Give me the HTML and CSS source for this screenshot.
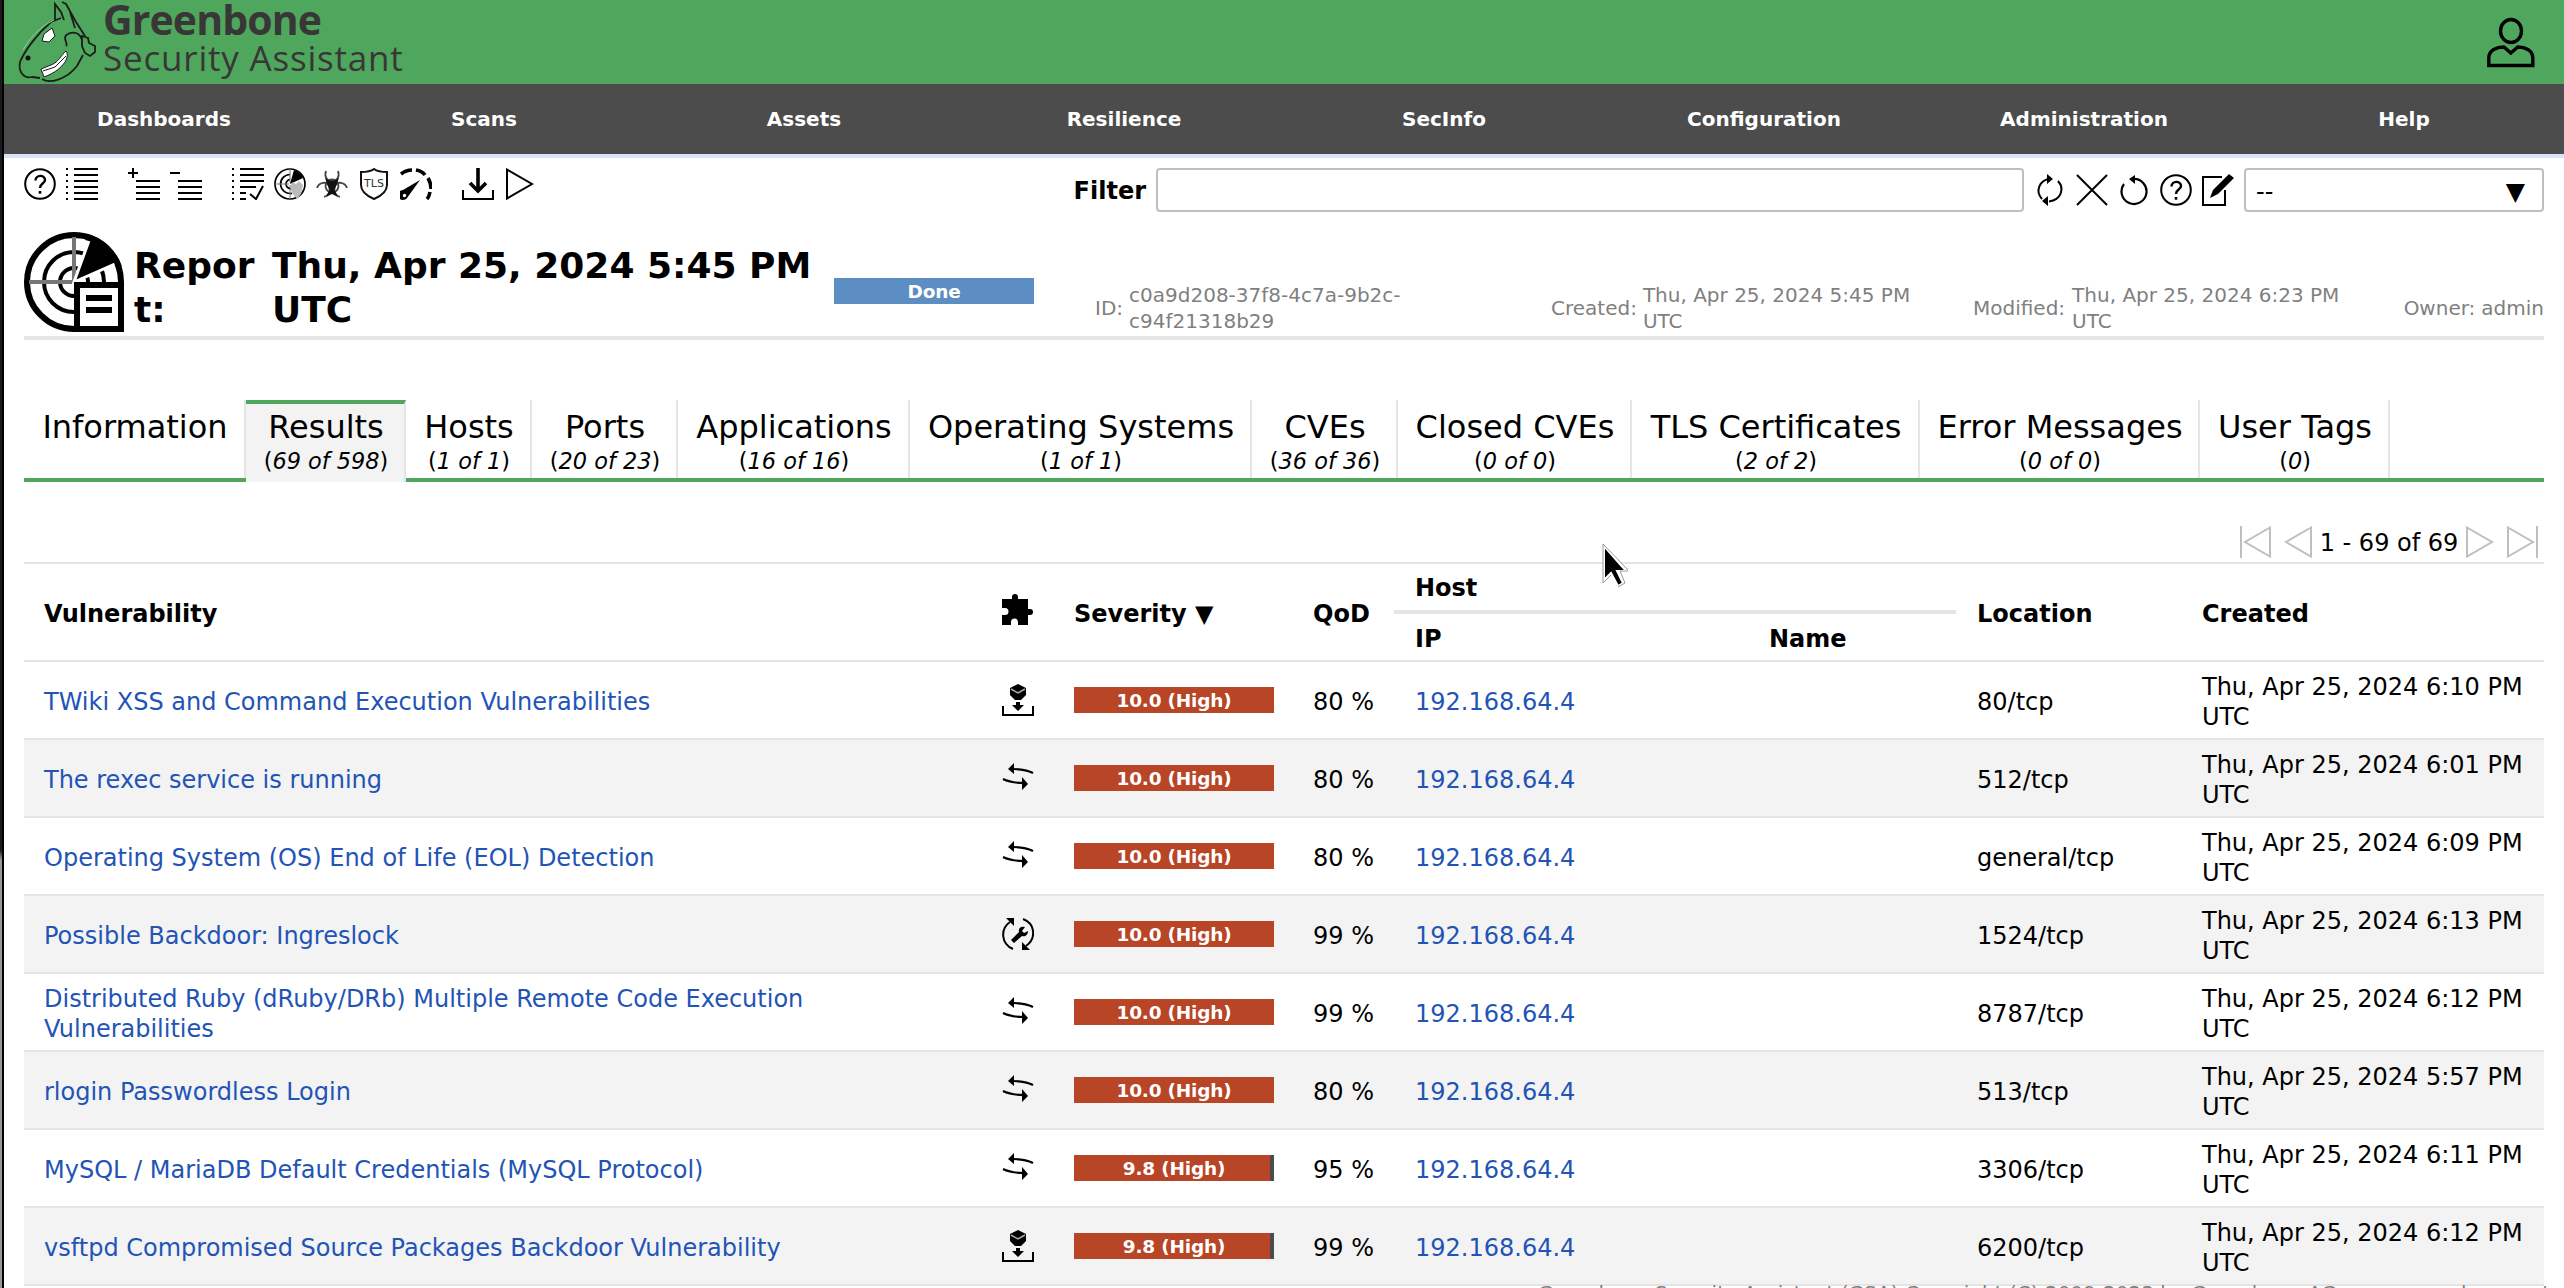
FILE: index.html
```html
<!DOCTYPE html>
<html lang="en">
<head>
<meta charset="utf-8">
<title>Greenbone Security Assistant</title>
<link rel="stylesheet" href="styles.css">
</head>
<body>
<svg class="defs" width="0" height="0">
  <defs>
    <symbol id="help" viewBox="0 0 32 32"><circle cx="16" cy="16" r="14.8" fill="none" stroke="#000" stroke-width="2"/><path d="M11.5 12.5c0-6 9.5-6 9.5-.6 0 3.800-5 3.600-5 8" fill="none" stroke="#000" stroke-width="2.400"/><path d="M14.700 23h2.600v2.700h-2.600z"/></symbol>
    <symbol id="list" viewBox="0 0 32 32"><path d="M8 1h24M8 7h24M8 13h24M8 19h24M8 25h24M8 31h24" stroke="#000" stroke-width="2"/><path d="M0 1h2M0 7h2M0 13h2M0 19h2M0 25h2M0 31h2" stroke="#000" stroke-width="2"/></symbol>
    <symbol id="plus" viewBox="0 0 32 32"><path d="M0 5h10M5 0v10M8 13h24M8 19h24M8 25h24M8 31h24" stroke="#000" stroke-width="2"/></symbol>
    <symbol id="minus" viewBox="0 0 32 32"><path d="M0 5h10M8 13h24M8 19h24M8 25h24M8 31h24" stroke="#000" stroke-width="2"/></symbol>
    <symbol id="results" viewBox="0 0 32 32"><path d="M8 1h24M8 7h24M8 13h24M8 19h16M8 25h6M8 31h6M0 1h2M0 7h2M0 13h2M0 19h2M0 25h2M0 31h2" stroke="#000" stroke-width="2"/><path d="M18 26l6 5L31 18" fill="none" stroke="#000" stroke-width="2"/></symbol>
    <symbol id="radar" viewBox="0 0 32 32"><g fill="none" stroke="#000" stroke-width="1.700"><circle cx="16" cy="16" r="15"/><path d="M16 6.500a9.500 9.500 0 1 0 2 18.800M16 11.500a4.500 4.500 0 1 0 1 9"/><path d="M16 1v14M1 16h14M16 17v14" stroke="#777" stroke-width="1"/></g><path d="M16 16L20 2a14 14 0 0 1 9 8z"/><path d="M16 18l3-4 3 2 3-3 4 4-2 9-4 5-5-6z" fill="#bbb"/></symbol>
    <symbol id="bio" viewBox="0 0 32 32"><g fill="none" stroke="#444" stroke-width="1.800"><path d="M10 3c-2 6 1 10 6 10s8-4 6-10M1 20c2-6 10-7 12-2 2 6-1 10-5 11M31 20c-2-6-10-7-12-2-2 6 1 10 5 11"/><circle cx="16" cy="18" r="6.500"/></g><path d="M9 10q7 6 14 0l-3 8-2 4h-4l-2-4zM14 21h4l4 8-6-3-6 3z" fill="#111"/></symbol>
    <symbol id="tls" viewBox="0 0 32 32"><path d="M16 1c-4 3-8 3-13 3v13c0 7 6 11 13 14 7-3 13-7 13-14V4C24 4 20 4 16 1z" fill="none" stroke="#111" stroke-width="2"/><text x="16" y="19" text-anchor="middle" class="tls-text">TLS</text></symbol>
    <symbol id="gauge" viewBox="0 0 32 32"><g fill="none" stroke="#000" stroke-width="3.600"><path d="M1 6q5-4 11-4M16 2q6 1 9 5M28 10q3 5 3 11M30 24q-1 5-3 7"/></g><path d="M20 12L7 30a5 5 0 1 1-4-8z"/><circle cx="4.500" cy="27.500" r="1.700" fill="#fff"/></symbol>
    <symbol id="download" viewBox="0 0 32 32"><path d="M1 22v9h30v-9" fill="none" stroke="#000" stroke-width="2"/><path d="M16 0v22M8 15l8 8 8-8" fill="none" stroke="#000" stroke-width="3.600"/></symbol>
    <symbol id="play" viewBox="0 0 32 32"><path d="M3 1.500L28 16 3 30.500z" fill="none" stroke="currentColor" stroke-width="2"/></symbol>
    <symbol id="prev" viewBox="0 0 32 32"><path d="M29 1.500L4 16l25 14.500z" fill="none" stroke="currentColor" stroke-width="2"/></symbol>
    <symbol id="first" viewBox="0 0 32 32"><path d="M1 0v32M30 1.500L5 16l25 14.500z" fill="none" stroke="currentColor" stroke-width="2"/></symbol>
    <symbol id="last" viewBox="0 0 32 32"><path d="M31 0v32M2 1.500L27 16 2 30.500z" fill="none" stroke="currentColor" stroke-width="2"/></symbol>
    <symbol id="refresh" viewBox="0 0 32 32"><path d="M8 25C1 17 5 6 17 4.500M24 7c7 8 3 19-9 20.500" fill="none" stroke="#000" stroke-width="2"/><path d="M13 0l6 5-6 5zM14 22l-6 5 6 5z"/></symbol>
    <symbol id="close" viewBox="0 0 32 32"><path d="M1 1l30 30M31 1L1 31" stroke="#000" stroke-width="2"/></symbol>
    <symbol id="reset" viewBox="0 0 32 32"><path d="M6 10a12.500 12.500 0 1 0 9-5" fill="none" stroke="#000" stroke-width="2.200"/><path d="M17 1v9l-6-5z"/></symbol>
    <symbol id="edit" viewBox="0 0 32 32"><path d="M20 3H1v28h22V16" fill="none" stroke="#000" stroke-width="2"/><path d="M8 24l3-8L27 0l5 4-16 16z"/></symbol>
    <symbol id="puzzle" viewBox="0 0 32 32"><path d="M0 6h10V4a3 3 0 1 1 6 0v2h10v10h2a3 3 0 1 1 0 6h-2v10H16v-3a3.500 3.500 0 0 0-7 0v3H0V22h3a3.500 3.500 0 0 0 0-7H0z"/></symbol>
    <symbol id="vendor" viewBox="0 0 32 32"><path d="M1 22v9h30v-9" fill="none" stroke="#000" stroke-width="2"/><path d="M16 0l8 4v7l-5 5h-6l-5-5V4zM14 18h4v3h4l-6 6-6-6h4z"/><path d="M9 5l7 4 7-4" fill="none" stroke="#aaa" stroke-width="1.500"/></symbol>
    <symbol id="mitigate" viewBox="0 0 32 32"><path d="M10 7c8 0 15 1 21 4M1 17c6 3 13 4 21 4" fill="none" stroke="#000" stroke-width="2.200"/><path d="M12 1L6 7l6 5zM20 15v13l6-6z"/></symbol>
    <symbol id="fix" viewBox="0 0 32 32"><path d="M8 4C-2 11-1 26 11 31M21 1C34 6 34 21 24 28" fill="none" stroke="#000" stroke-width="2"/><path d="M4 0h8v8zM28 32h-8v-8z"/><path d="M9 22l8-8c-1-4 2-6 6-5l-3 4 2 2 4-2c0 4-3 6-6 5l-8 7z"/></symbol>
  </defs>
</svg>
<div class="desktop"></div>
<div class="app">
  <header class="header">
    <svg class="horse" viewBox="0 0 76 84"><g fill="none" stroke="#1c1c1c" stroke-width="1.800"><path d="M45 18L35 22C22 33 9 50 4 62C2 72 8 79 16 77L24 78"/><path d="M26 79C33 84 50 80 61 66L67 55"/><path d="M39 20L39 4l6 8 3 8M46 2l4 2 10 18 9 14M54 12l5 16"/><path d="M50 46c3-2-5-9 2-12 6-3 12-1 14 6M66 36l6 2 1 5 6 3v6l-5 4-5-3-3-7z"/></g><path d="M28 34l8-6 3 8-6 6-7-1z" fill="#fff" stroke="#1c1c1c"/><path d="M25 69l10-4c8-3 10-10 15-14 5 7-5 20-22 26z" fill="#fff" stroke="#1c1c1c"/><path d="M27 71l12-4 11-11" fill="none" stroke="#1c1c1c"/><path d="M7 50C14 38 22 28 38 20" fill="none" stroke="#8bcf9a"/><circle cx="12" cy="58" r="2.500" fill="#111"/></svg>
    <div class="brand"><div class="brand-name">Greenbone</div><div class="brand-sub">Security Assistant</div></div>
    <svg class="user" viewBox="0 0 48 50"><g fill="none" stroke="#000" stroke-width="3.400"><ellipse cx="24" cy="13" rx="10.500" ry="11.500"/><path d="M1.800 47.500V40c0-8 8-11 15-11l7 6 7-6c7 0 15 3 15 11v7.500z"/></g></svg>
  </header>
  <nav class="nav"><span>Dashboards</span><span>Scans</span><span>Assets</span><span>Resilience</span><span>SecInfo</span><span>Configuration</span><span>Administration</span><span>Help</span></nav>
  <main class="main">
    <div class="toolbar">
      <div class="icons"><svg><use href="#help"/></svg><svg><use href="#list"/></svg></div>
      <div class="icons"><svg><use href="#plus"/></svg><svg><use href="#minus"/></svg></div>
      <div class="icons"><svg><use href="#results"/></svg><svg><use href="#radar"/></svg><svg><use href="#bio"/></svg><svg><use href="#tls"/></svg><svg><use href="#gauge"/></svg></div>
      <div class="icons"><svg><use href="#download"/></svg><svg><use href="#play"/></svg></div>
      <div class="filter">
        <b>Filter</b><div class="field"></div>
        <div class="icons"><svg><use href="#refresh"/></svg><svg><use href="#close"/></svg><svg><use href="#reset"/></svg><svg><use href="#help"/></svg><svg><use href="#edit"/></svg></div>
        <div class="select"><span>--</span><span class="caret">▼</span></div>
      </div>
    </div>
    <section class="title">
      <svg class="report" viewBox="0 0 100 100"><g fill="none" stroke="#000"><circle cx="50" cy="50" r="47" stroke-width="6"/><circle cx="50" cy="50" r="30" stroke-width="4"/><circle cx="50" cy="50" r="14" stroke-width="4"/><path d="M50 5v45M5 50h45" stroke="#777" stroke-width="4"/></g><path d="M50 50L66 6a47 47 0 0 1 27 25z" stroke="#fff" stroke-width="3"/><path d="M62 5a46 46 0 0 1 33 30" fill="none" stroke="#000" stroke-width="6"/><path d="M53 53h44v44H53z" fill="#fff" stroke="#000" stroke-width="6"/><path d="M62 66h26M62 78h26" stroke="#000" stroke-width="6"/></svg>
      <h2 class="kind">Repor<br>t:</h2><h2 class="when">Thu, Apr 25, 2024 5:45 PM UTC</h2>
      <div class="status">Done</div>
      <dl class="meta">
        <div class="m-id"><dt>ID:</dt><dd>c0a9d208-37f8-4c7a-9b2c-<br>c94f21318b29</dd></div>
        <div class="m-created"><dt>Created:</dt><dd>Thu, Apr 25, 2024 5:45 PM<br>UTC</dd></div>
        <div class="m-mod"><dt>Modified:</dt><dd>Thu, Apr 25, 2024 6:23 PM<br>UTC</dd></div>
        <div class="m-owner"><dt>Owner:</dt><dd>admin</dd></div>
      </dl>
    </section>
    <div class="tabs">
      <div class="tab t1">Information</div>
      <div class="tab t2 active">Results<i>(<em>69 of 598</em>)</i></div>
      <div class="tab t3">Hosts<i>(<em>1 of 1</em>)</i></div>
      <div class="tab t4">Ports<i>(<em>20 of 23</em>)</i></div>
      <div class="tab t5">Applications<i>(<em>16 of 16</em>)</i></div>
      <div class="tab t6">Operating Systems<i>(<em>1 of 1</em>)</i></div>
      <div class="tab t7">CVEs<i>(<em>36 of 36</em>)</i></div>
      <div class="tab t8">Closed CVEs<i>(<em>0 of 0</em>)</i></div>
      <div class="tab t9">TLS Certificates<i>(<em>2 of 2</em>)</i></div>
      <div class="tab t10">Error Messages<i>(<em>0 of 0</em>)</i></div>
      <div class="tab t11">User Tags<i>(<em>0</em>)</i></div>
    </div>
    <div class="pager"><svg><use href="#first"/></svg><svg><use href="#prev"/></svg><span>1 - 69 of 69</span><svg><use href="#play"/></svg><svg><use href="#last"/></svg></div>
    <div class="table">
      <div class="row head"><span>Vulnerability</span><svg><use href="#puzzle"/></svg><span>Severity ▼</span><span>QoD</span><div class="host"><span class="host-top">Host</span><span>IP</span><span>Name</span></div><span>Location</span><span>Created</span></div>
      <div class="row"><a>TWiki XSS and Command Execution Vulnerabilities</a><svg><use href="#vendor"/></svg><span class="sev">10.0 (High)</span><span>80 %</span><a>192.168.64.4</a><span>80/tcp</span><span>Thu, Apr 25, 2024 6:10 PM<br>UTC</span></div>
      <div class="row"><a>The rexec service is running</a><svg><use href="#mitigate"/></svg><span class="sev">10.0 (High)</span><span>80 %</span><a>192.168.64.4</a><span>512/tcp</span><span>Thu, Apr 25, 2024 6:01 PM<br>UTC</span></div>
      <div class="row"><a>Operating System (OS) End of Life (EOL) Detection</a><svg><use href="#mitigate"/></svg><span class="sev">10.0 (High)</span><span>80 %</span><a>192.168.64.4</a><span>general/tcp</span><span>Thu, Apr 25, 2024 6:09 PM<br>UTC</span></div>
      <div class="row"><a>Possible Backdoor: Ingreslock</a><svg><use href="#fix"/></svg><span class="sev">10.0 (High)</span><span>99 %</span><a>192.168.64.4</a><span>1524/tcp</span><span>Thu, Apr 25, 2024 6:13 PM<br>UTC</span></div>
      <div class="row"><a>Distributed Ruby (dRuby/DRb) Multiple Remote Code Execution<br>Vulnerabilities</a><svg><use href="#mitigate"/></svg><span class="sev">10.0 (High)</span><span>99 %</span><a>192.168.64.4</a><span>8787/tcp</span><span>Thu, Apr 25, 2024 6:12 PM<br>UTC</span></div>
      <div class="row"><a>rlogin Passwordless Login</a><svg><use href="#mitigate"/></svg><span class="sev">10.0 (High)</span><span>80 %</span><a>192.168.64.4</a><span>513/tcp</span><span>Thu, Apr 25, 2024 5:57 PM<br>UTC</span></div>
      <div class="row"><a>MySQL / MariaDB Default Credentials (MySQL Protocol)</a><svg><use href="#mitigate"/></svg><span class="sev part">9.8 (High)</span><span>95 %</span><a>192.168.64.4</a><span>3306/tcp</span><span>Thu, Apr 25, 2024 6:11 PM<br>UTC</span></div>
      <div class="row"><a>vsftpd Compromised Source Packages Backdoor Vulnerability</a><svg><use href="#vendor"/></svg><span class="sev part">9.8 (High)</span><span>99 %</span><a>192.168.64.4</a><span>6200/tcp</span><span>Thu, Apr 25, 2024 6:12 PM<br>UTC</span></div>
    </div>
  </main>
  <footer class="footer">Greenbone Security Assistant (GSA) Copyright (C) 2009-2023 by Greenbone AG, www.greenbone.net</footer>
</div>
<svg class="cursor" viewBox="0 0 26 44"><path d="M2 2v34l7-7 7 13 5-3-6-12h9z" fill="#000" stroke="#fff" stroke-width="2"/><path d="M1 0v39l8-8M26 26L1 0M26 27h-8l5 12-7 4" fill="none" stroke="#999" stroke-width="1"/></svg>
</body>
</html>
```
FILE: styles.css
```css
* { box-sizing: border-box; }
html, body { margin: 0; height: 1288px; overflow: hidden; }
body { display: flex; background: #fff; color: #000; font: 24px/30px "DejaVu Sans", sans-serif; white-space: nowrap; }
svg { display: block; width: 32px; height: 32px; overflow: visible; flex: none; }
.defs { position: absolute; width: 0; height: 0; }
.desktop { flex: none; width: 4px; background: linear-gradient(#1a1a1c 0, #1a1a1c 850px, #999 860px); border-right: 2px solid #000; }
.app { flex: 1; min-width: 0; }

.header { height: 84px; background: #4ea75c; display: flex; padding: 0 29px 0 12px; }
.horse { width: 76px; height: 84px; }
.brand { margin-left: 11px; flex: 1; color: #393637; font-family: "Open Sans", sans-serif; }
.brand-name { font-size: 41px; font-weight: 700; line-height: 38px; letter-spacing: -.9px; }
.brand-sub { font-size: 35px; line-height: 39px; font-weight: 400; letter-spacing: .8px; }
.user { width: 48px; height: 50px; margin-top: 18px; }
.nav { height: 74px; background: #4c4c4c; border-bottom: 4px solid #d8e4f8; display: grid; grid-template-columns: repeat(8, 1fr); align-items: center; text-align: center; color: #fff; font-size: 20px; font-weight: 700; }

.main { padding: 10px 20px 0; }
.toolbar { display: flex; gap: 30px; height: 62px; }
.icons { display: flex; gap: 10px; }
.filter { margin-left: auto; display: flex; align-items: center; height: 44px; gap: 10px; }
.filter b { padding-top: 2px; }
.field { width: 868px; height: 44px; border: 2px solid #bfbfbf; border-radius: 4px; }
.select { width: 300px; height: 44px; border: 2px solid #bfbfbf; border-radius: 4px; display: flex; justify-content: space-between; align-items: center; padding: 3px 17px 0 10px; }
.caret { font-size: 25px; }
.tls-text { font: 11px "DejaVu Sans", sans-serif; fill: #333; }

.title { display: flex; height: 110px; border-bottom: 4px solid #e5e5e5; }
.title h2 { margin: 0; font-size: 36px; line-height: 44px; padding-top: 14px; flex: none; }
.report { width: 100px; height: 100px; margin-top: 2px; }
.title .kind { width: 148px; padding-left: 10px; }
.title .when { width: 562px; white-space: normal; }
.status { flex: none; margin-top: 48px; width: 200px; height: 26px; line-height: 27px; background: #5c8dc3; color: #fff; text-align: center; font-weight: 700; font-size: 18.500px; letter-spacing: -.2px; }
.meta { margin: 52px 0 0; display: flex; flex: 1; font-size: 20px; line-height: 26px; color: #7f7f7f; padding-left: 61px; }
.meta div { display: flex; align-items: center; height: 52px; gap: 6px; }
.meta dd { margin: 0; }
.m-id { width: 456px; }
.m-created { width: 422px; }
.meta .m-mod { gap: 7px; }
.meta .m-owner { margin-left: auto; }

.tabs { margin-top: 60px; height: 82px; display: flex; border-bottom: 4px solid #4ea75c; }
.tab { height: 78px; border-right: 2px solid #e5e5e5; font-size: 32px; line-height: 38px; padding: 8px 0 0 2px; text-align: center; }
.tab i { display: block; font-size: 22.400px; line-height: 28px; font-style: normal; padding-top: 1px; }
.active { height: 82px; background: #f3f3f3; border-top: 4px solid #4ea75c; padding-top: 4px; }
.t1 { width: 222px; }
.t2 { width: 160px; }
.t3 { width: 126px; }
.t4 { width: 146px; }
.t5 { width: 232px; }
.t6 { width: 342px; }
.t7 { width: 146px; }
.t8 { width: 234px; }
.t9 { width: 288px; }
.t10 { width: 280px; }
.t11 { width: 190px; }
.pager { height: 80px; display: flex; justify-content: flex-end; align-items: flex-end; gap: 10px; padding: 0 6px 4px 0; color: #bfbfbf; }
.pager span { color: #000; width: 140px; text-align: center; margin: 0 -5px; }

.table { border-top: 2px solid #e5e5e5; }
.row { display: grid; grid-template-columns: 958px 72px 239px 102px 562px 225px 342px; align-items: center; height: 78px; padding-left: 20px; border-bottom: 2px solid #e5e5e5; }
.row > span:not(.sev), .row > a, .host > span { padding-top: 3px; }
.row:nth-child(odd) { background: #f3f3f3; }
.row.head { height: 98px; background: #fff; font-weight: 700; }
.head > svg { margin-top: -6px; }
.row a { color: #2254b6; }
.sev { width: 200px; height: 26px; line-height: 27px; background: #b74526; color: #fff; font-size: 18.500px; letter-spacing: -.2px; font-weight: 700; text-align: center; }
.part { background: linear-gradient(90deg, #b74526 196px, #4c4c4c 196px); }
.host { height: 96px; display: grid; grid-template: 50px 46px / 354px 1fr; align-items: center; margin: 0 21px 0 -21px; padding-left: 21px; }
.host .host-top { grid-column: 1 / 3; height: 50px; margin-left: -21px; padding: 9px 21px 0; border-bottom: 4px solid #e5e5e5; }
.footer { font-size: 20px; line-height: 24px; height: 24px; margin-top: -5px; padding-right: 14px; text-align: right; color: #7f7f7f; }
.cursor { position: absolute; left: 1602px; top: 544px; width: 26px; height: 44px; }
```
